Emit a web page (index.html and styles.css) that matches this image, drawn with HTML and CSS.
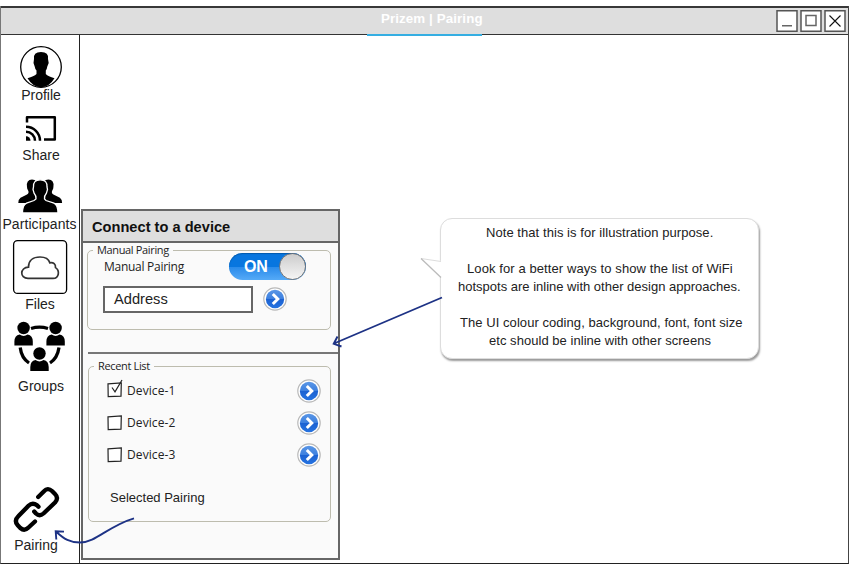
FILE: index.html
```html
<!DOCTYPE html>
<html lang="en">
<head>
<meta charset="utf-8">
<title>Prizem | Pairing</title>
<link rel="stylesheet" href="styles.css">
</head>
<body>
<svg class="defs" aria-hidden="true">
  <defs>
    <linearGradient id="blue" x1="0" y1="0" x2="0" y2="1"><stop offset="0" stop-color="#5a96e6"/><stop offset=".48" stop-color="#3d80df"/><stop offset=".52" stop-color="#1c62d2"/><stop offset="1" stop-color="#2673e0"/></linearGradient>
    <symbol id="go" viewBox="0 0 24 24"><circle cx="12" cy="12" r="11.2" fill="#fff" stroke="#b9b9b9" stroke-width="1.2"/><circle cx="12" cy="12" r="9.200" fill="url(#blue)"/><path d="M9.800 7l5 5-5 5" fill="none" stroke="#fff" stroke-width="3"/></symbol>
    <symbol id="box" viewBox="0 0 18 20"><path d="M2 5.8L15.3 5 15 18.2 2.2 18.7z" fill="#fff" stroke="#222" stroke-width="1.2"/></symbol>
    <g id="person"><circle cx="0" cy="-8.5" r="6.2"/><path d="M-9.2 9V5Q-9.2-1-4-2Q0 .8 4-2Q9.2-1 9.2 5V9z"/></g>
  </defs>
</svg>
<div class="window">
  <header class="titlebar">
    <h1 class="title">Prizem | Pairing</h1>
    <svg class="controls" viewBox="776 9 71 24">
      <g fill="#fff" stroke="#555" stroke-width="1.5"><path d="M777 10.700h20v20.500h-20zM801 10.700h20v20.500h-20zM825 10.700h20v20.500h-20z"/><path d="M782 25.700h10M806 15.500h10v10h-10z" stroke="#666"/></g>
      <path d="M829.500 15.500l11 11M840.500 15.500l-11 11" stroke="#111" stroke-width="1.1"/>
    </svg>
  </header>
  <div class="content">
    <nav class="sidebar">
      <a class="item"><svg height="52" viewBox="0 35 79 52"><circle cx="41" cy="67" r="20.300" fill="#fff" stroke="#000" stroke-width="1.300"/><path d="M34 59Q33 52 41 52Q49 52 48 59L48.700 63L47.300 66.500Q47 69 45.800 70.500V74Q48 76.500 54.500 78.200Q49 87.300 41 87.300Q33 87.300 27.500 78.200Q34 76.500 36.500 74V70.500Q35 69 34.700 66.500L33.500 63z"/></svg><span>Profile</span></a>
      <a class="item"><svg height="44" viewBox="0 103 79 44"><path d="M27 122.500V117.200H54.800V139.600H44" fill="none" stroke="#000" stroke-width="2.500" stroke-linejoin="round"/><path d="M26 126.700A14 14 0 0 1 40 140.700M26 131.700A9 9 0 0 1 35 140.700" fill="none" stroke="#000" stroke-width="2.500"/><path d="M26 136.200A4.500 4.500 0 0 1 30.500 140.700H26z"/></svg><span>Share</span></a>
      <a class="item"><svg height="53" viewBox="0 163 79 53"><path d="M27 187Q26 179.500 32 179.500Q38 179.500 37 187L36 191Q35 194 36 196L39 200V203H18.300Q18.200 199.500 20.500 197.800L27 194.500Q29.500 193 28 190.300Q27 189 27 187z"/><path transform="matrix(-1 0 0 1 80.400 0)" d="M27 187Q26 179.500 32 179.500Q38 179.500 37 187L36 191Q35 194 36 196L39 200V203H18.300Q18.200 199.500 20.500 197.800L27 194.500Q29.500 193 28 190.300Q27 189 27 187z"/><path d="M33.500 187Q33 179.800 40.200 179.800Q47.500 179.800 47 187L47.500 189.500L46.500 193Q44 196 44.500 199L46 200.500L54 203.200Q57.800 205 58 213H22.500Q22.500 205 26.500 203.200L34 200.500L36 199Q36.500 196 34 193L33 189.500z" stroke="#fff" stroke-width="1.300"/></svg><span class="participants">Participants</span></a>
      <a class="item"><svg height="64" viewBox="0 232 79 64"><rect x="13.600" y="240.600" width="53" height="52.800" rx="4" fill="#fff" stroke="#000" stroke-width="1.300"/><path d="M28 278.400C19.500 278.400 19.700 267.500 28.500 267.100C28.500 260.500 33 257 40 257C45.500 257 48.800 259.300 49.800 262.800C53.500 262 55.800 264.500 55.500 267.600C60 270.500 59.200 278.400 53 278.400z" fill="none" stroke="#333" stroke-width="1.700"/></svg><span class="files">Files</span></a>
      <a class="item"><svg height="66" viewBox="0 312 79 66"><use href="#person" x="23.600" y="336.500"/><use href="#person" x="55.600" y="336.500"/><use href="#person" x="39.500" y="362"/><path d="M31 328.500Q39.500 325.800 48 328.500M20.200 347.500Q21.500 358 29 363M59 347.500Q57.500 358 50 363" fill="none" stroke="#000" stroke-width="3.300"/></svg><span>Groups</span></a>
      <a class="item"><svg height="143" viewBox="0 394 79 143"><g fill="none" stroke="#000" stroke-width="4.300" stroke-linecap="round" stroke-linejoin="round"><path d="M38.200 497L44 491.200Q47.800 487 52 491L55 494Q59 498 55 502.500L43.500 513.500Q39.500 517 36 513.500L34.200 511.500"/><path d="M38.500 506.800L37 505.300Q32.500 501.800 28.500 505.800L18.500 516Q13.800 520.500 17.500 525L20.300 528Q24.500 531.500 28.500 527.500L35 521.500"/></g></svg><span class="pair">Pairing</span></a>
    </nav>
    <main class="canvas">
      <section class="panel">
        <h2>Connect to a device</h2>
        <fieldset class="manual">
          <legend>Manual Pairing</legend>
          <div class="toggle-row"><span>Manual Pairing</span><div class="toggle"><b>ON</b><i></i></div></div>
          <div class="address-row"><div class="address">Address</div><svg class="go"><use href="#go"/></svg></div>
        </fieldset>
        <hr>
        <fieldset class="recent">
          <legend>Recent List</legend>
          <div class="device"><svg class="check" viewBox="0 0 18 20"><use href="#box"/><path d="M6 9.500L9 13.800L16 2" fill="none" stroke="#222" stroke-width="1.200"/></svg><span>Device-1</span><svg class="go"><use href="#go"/></svg></div>
          <div class="device"><svg class="check"><use href="#box"/></svg><span>Device-2</span><svg class="go"><use href="#go"/></svg></div>
          <div class="device"><svg class="check"><use href="#box"/></svg><span>Device-3</span><svg class="go"><use href="#go"/></svg></div>
          <p>Selected Pairing</p>
        </fieldset>
      </section>
      <aside class="note">
        <p class="l1">Note that this is for illustration purpose.</p>
        <p class="l2">Look for a better ways to show the list of WiFi</p>
        <p class="l3">hotspots are inline with other design approaches.</p>
        <p class="l4">The UI colour coding, background, font, font size</p>
        <p class="l5">etc should be inline with other screens</p>
        <svg class="tail" viewBox="420 255 22 24"><path d="M442 260L421 257.500L442 277z" fill="#fff"/><path d="M441 260.500L421 257.500" stroke="#ddd" fill="none"/><path d="M421 257.500L441 276.500" stroke="#bbb" stroke-width="1.300"/></svg>
      </aside>
    </main>
  </div>
</div>
<svg class="arrows" viewBox="0 0 849 564"><g fill="none" stroke="#1d3285" stroke-width="1.900"><path d="M442 297.500L334 343.500M337.500 336.500L333.700 343.800L341.500 346.500M134 518.300C108 526 96 542.500 80 542.500C70 542.500 64 539 56.500 532M56.300 539.500L55.700 531.200L64 531.600"/></g></svg>
</body>
</html>
```

FILE: styles.css
```css
* { box-sizing: border-box; }
body { margin: 0; padding-top: 6px; width: 849px; height: 564px; overflow: hidden; background: #fff; font-family: "Liberation Sans", Arial, sans-serif; color: #222; }
p, h1, h2 { margin: 0; }
.defs { position: absolute; width: 0; height: 0; }
.window { height: 558px; display: flex; flex-direction: column; border-left: 1px solid #777; border-bottom: 1px solid #222; border-right: 1px solid #444; }
.titlebar { height: 29px; flex: none; display: flex; background: #dedede; border-top: 2px solid #383838; border-bottom: 1px solid #333; }
.title { width: 115px; height: 28px; margin-left: 366px; padding-left: 14px; border-bottom: 2px solid #35aee2; font-size: 13.33px; line-height: 22px; letter-spacing: .1px; color: #fff; white-space: nowrap; position: relative; z-index: 1; }
.controls { width: 71px; height: 24px; margin: 1px 1px 0 auto; }
.content { flex: 1; min-height: 0; display: flex; }
.sidebar { width: 79px; flex: none; border-right: 1px solid #222; }
.item { display: block; text-align: center; font-size: 14px; line-height: 16px; margin-left: -1px; white-space: nowrap; width: 79px; }
.item svg { display: block; width: 79px; overflow: visible; }
.item span { display: block; padding-left: 3px; }
.item .participants { padding: 0; letter-spacing: .08px; }
.item .files { padding-left: 1px; }
.item .pair { padding: 0 7px 0 0; }
.canvas { flex: 1; display: flex; align-items: flex-start; }
.panel { width: 259px; height: 351px; margin: 174px 0 0 1px; border: 2px solid #666; background: #fafafa; }
.panel h2 { height: 32px; padding-left: 9px; background: #dedede; border-bottom: 2px solid #666; font-size: 14.6px; line-height: 33px; letter-spacing: .02px; color: #111; }
fieldset { min-width: 0; margin: 0 0 0 4px; padding: 0; width: 244px; border: 1px solid #bdbcae; border-radius: 5px; }
legend { margin-left: 5px; padding: 0 4px; font: 11px/14px "Open Sans", "Noto Sans", sans-serif; letter-spacing: -.35px; }
.manual { height: 87px; }
.toggle-row { display: flex; height: 29px; margin-top: -5px; padding-left: 16px; font: 12px/30px "Open Sans", "Noto Sans", sans-serif; letter-spacing: -.27px; }
.toggle-row span { width: 125px; }
.toggle { width: 77px; height: 27px; margin-top: 1px; border-radius: 14px; background: linear-gradient(#0876df 0 50%, #298aea 51%, #55aaf7); box-shadow: inset 0 1px 1px #035aac; display: flex; justify-content: space-between; color: #fff; font: bold 16px/27px "Liberation Sans", sans-serif; }
.toggle b { margin-left: 15px; }
.toggle i { width: 27px; border: 1px solid #777; border-radius: 50%; background: linear-gradient(#ccc, #f5f5f5); }
.address-row { display: flex; margin: 5px 0 0 15px; }
.address { width: 150px; height: 27px; padding-left: 9px; border: 2px solid #666; background: #fff; font-size: 14.67px; line-height: 23px; }
.go { width: 24px; height: 24px; flex: none; }
.address-row .go { margin: 1px 0 0 10px; }
.panel hr { height: 2px; margin: 22px 0 0 5px; border: 0; background: #777; }
.recent { margin: 5px 0 0 5px; width: 243px; height: 163px; }
.device { display: flex; align-items: center; height: 32px; padding-left: 17px; font: 12px/24px "Open Sans", "Noto Sans", sans-serif; letter-spacing: .1px; }
.device:first-of-type { margin-top: 1px; height: 33px; }
.device .check { width: 18px; height: 20px; margin: -5px 3px 0 0; }
.device span { width: 170px; }
.recent p { margin: 18px 0 0 21px; font-size: 13px; line-height: 17px; }
.note { position: relative; width: 319px; height: 141px; margin: 183px 0 0 100px; padding-top: 5px; border: 1px solid #ddd; border-radius: 12px; background: #fff; box-shadow: 1px 2px 2px #999; text-align: center; font-size: 13px; line-height: 18px; white-space: nowrap; }
.note p { width: max-content; }
.note .l1 { margin-left: 45px; margin-bottom: 18px; letter-spacing: .06px; }
.note .l2 { margin-left: 26px; letter-spacing: .09px; }
.note .l3 { margin-left: 17px; margin-bottom: 18px; }
.note .l4 { margin-left: 19px; letter-spacing: .06px; }
.note .l5 { margin-left: 48px; letter-spacing: .04px; }
.tail { position: absolute; left: -21px; top: 37px; width: 22px; height: 24px; }
.arrows { position: absolute; left: 0; top: 0; width: 849px; height: 564px; pointer-events: none; }
```
